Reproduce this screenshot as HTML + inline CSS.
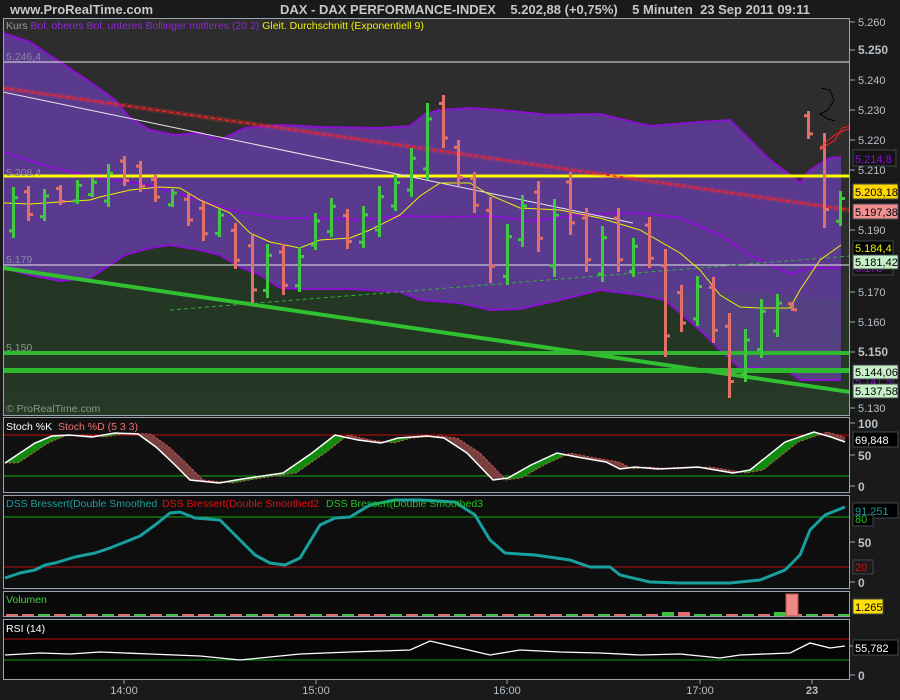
<!DOCTYPE html>
<html><head><meta charset="utf-8"><style>
html,body{margin:0;padding:0;background:#1a1a1a;}
body{width:900px;height:700px;overflow:hidden;position:relative;font-family:"Liberation Sans",sans-serif;}
svg{position:absolute;left:0;top:0;}
</style></head><body>
<svg id="s" width="900" height="700" xmlns="http://www.w3.org/2000/svg" font-family="Liberation Sans, sans-serif">
<defs>
<clipPath id="mc"><rect x="4" y="19" width="845" height="396"/></clipPath>
<linearGradient id="gg" x1="0" y1="0" x2="0" y2="1"><stop offset="0" stop-color="#203020"/><stop offset="1" stop-color="#263826"/></linearGradient>
</defs>
<rect x="0" y="0" width="900" height="700" fill="#1a1a1a"/>
<text x="10" y="14" font-size="13" font-weight="bold" fill="#c4c8cc">www.ProRealTime.com</text>
<text x="280" y="14" font-size="13" font-weight="bold" fill="#c4c8cc" xml:space="preserve">DAX - DAX PERFORMANCE-INDEX    5.202,88 (+0,75%)    5 Minuten  23 Sep 2011 09:11</text>
<g id="main" clip-path="url(#mc)"></g>
<rect x="3.5" y="18.5" width="846" height="397" fill="none" stroke="#9aa4ae"/>
<text x="6" y="29" font-size="10.5" fill="#9a9a9a">Kurs <tspan fill="#8a2ad0">Bol. oberes Bol. unteres Bollinger mittleres (20 2)</tspan> <tspan fill="#f0f000">Gleit. Durchschnitt (Exponentiell 9)</tspan></text>
<text x="6" y="60" font-size="10.5" fill="#8a8aa0">5.246,4</text>
<text x="6" y="176" font-size="10.5" fill="#8a8aa0">5.208,4</text>
<text x="6" y="263" font-size="10.5" fill="#8a8aa0">5.179</text>
<text x="6" y="351" font-size="10.5" fill="#8a9a8a">5.150</text>
<text x="6" y="412" font-size="10.5" fill="#8a9a8a">© ProRealTime.com</text>
<g id="axis" font-size="11" fill="#b8c0c8"></g>
<g id="panels"></g>
<g id="boxes" font-size="11"></g>
</svg>
<script>
var NS="http://www.w3.org/2000/svg";
function el(p,t,a,txt){var e=document.createElementNS(NS,t);for(var k in a)e.setAttribute(k,a[k]);if(txt!=null)e.textContent=txt;document.getElementById(p).appendChild(e);return e;}
function pts(a){return a.map(function(p){return p[0]+","+p[1]}).join(" ");}
var upper=[[3,33],[30,42],[60,62],[90,82],[115,100],[130,118],[150,130],[175,135],[200,133],[220,140],[245,128],[280,125],[320,127],[380,128],[410,126],[425,114],[440,110],[470,108],[500,110],[550,115],[600,114],[650,126],[700,122],[730,120],[770,160],[790,175],[800,183],[810,170],[830,158],[841,157]];
var lower=[[3,268],[30,275],[60,281],[90,278],[110,265],[125,255],[150,248],[170,245],[200,250],[220,255],[240,267],[260,275],[280,288],[300,289],[350,289],[400,292],[420,300],[460,303],[490,310],[520,309],[560,300],[600,290],[640,295],[665,300],[700,330],[720,350],[740,368],[760,368],[790,372],[800,380],[841,380]];
var mid=[[3,152],[50,167],[100,178],[150,185],[190,197],[230,210],[280,218],[320,218],[360,220],[400,216],[450,217],[490,216],[530,221],[580,215],[620,213],[650,214],[680,218],[720,235],[750,255],[790,274],[810,268],[841,268]];
var ema=[[3,203],[30,204],[60,202],[90,200],[100,197],[130,190],[160,187],[180,188],[200,200],[230,213],[250,233],[270,242],[300,248],[320,240],[350,238],[370,230],[400,215],[420,196],[440,183],[470,183],[490,195],[520,208],[560,210],[600,218],[640,230],[680,253],[700,270],[720,295],[740,307],[760,308],[790,308],[800,290],[820,260],[841,245]];
el("main","rect",{x:0,y:0,width:900,height:420,fill:"url(#gg)"});
el("main","polygon",{points:pts([[3,19],[850,19],[850,258]].concat(lower.slice().reverse())),fill:"#2d2d2d"});
el("main","polygon",{points:pts(upper.concat(lower.slice().reverse())),fill:"#5a3a8e"});
el("main","polygon",{points:pts([[640,295],[665,300],[700,330],[720,350],[740,368],[760,368],[790,372],[800,380],[841,380],[841,300],[700,290]]),fill:"#4c4c72",opacity:"0.45"});
el("main","polyline",{points:pts(upper),fill:"none",stroke:"#8a10d0","stroke-width":2});
el("main","polyline",{points:pts(lower),fill:"none",stroke:"#8a10d0","stroke-width":2});
el("main","polyline",{points:pts(mid),fill:"none",stroke:"#8a10d0","stroke-width":2});
el("main","line",{x1:3,y1:62,x2:850,y2:62,stroke:"#e8e8e8","stroke-width":1});
el("main","line",{x1:3,y1:265,x2:850,y2:265,stroke:"#e8e8e8","stroke-width":1});
el("main","line",{x1:3,y1:176,x2:850,y2:176,stroke:"#ffff00","stroke-width":3});
el("main","line",{x1:3,y1:88,x2:850,y2:210,stroke:"#ff3030","stroke-width":5,opacity:0.25});
el("main","line",{x1:3,y1:88,x2:850,y2:210,stroke:"#ff2020","stroke-width":1.5,"stroke-dasharray":"4,3"});
el("main","line",{x1:3,y1:92,x2:633,y2:223,stroke:"#e8e8e8","stroke-width":1});
el("main","line",{x1:3,y1:268,x2:850,y2:392,stroke:"#30c030","stroke-width":4});
el("main","line",{x1:170,y1:310,x2:850,y2:256,stroke:"#30b030","stroke-width":1,"stroke-dasharray":"4,3"});
el("main","rect",{x:3,y:351,width:847,height:4,fill:"#30b830"});
el("main","rect",{x:3,y:368,width:847,height:5,fill:"#30b830"});
el("main","polyline",{points:pts(ema),fill:"none",stroke:"#f0f000","stroke-width":1});
var bars=[[13,187,238,"g"],[28,186,221,"r"],[44,189,221,"g"],[60,185,205,"r"],[77,180,204,"g"],[92,178,197,"g"],[108,164,207,"g"],[124,156,186,"r"],[140,161,192,"r"],[155,175,202,"r"],[172,189,207,"g"],[188,194,226,"r"],[203,202,241,"r"],[219,209,237,"g"],[235,223,269,"r"],[252,235,303,"r"],[267,244,298,"g"],[283,244,295,"r"],[299,247,292,"g"],[315,213,250,"g"],[331,198,237,"g"],[347,209,249,"r"],[363,206,248,"g"],[379,186,237,"g"],[395,175,211,"g"],[411,148,197,"g"],[427,103,180,"g"],[443,95,148,"r"],[458,140,186,"r"],[474,172,213,"r"],[490,197,283,"r"],[507,224,285,"g"],[522,195,247,"g"],[538,181,252,"r"],[554,199,277,"g"],[570,172,235,"r"],[586,208,272,"r"],[602,226,282,"g"],[618,208,272,"r"],[633,238,277,"g"],[649,217,268,"r"],[665,249,357,"r"],[681,285,332,"r"],[697,276,326,"g"],[713,277,343,"r"],[729,313,398,"r"],[745,329,382,"g"],[761,299,358,"g"],[777,294,337,"g"],[792,302,311,"r"],[808,111,139,"r"],[824,133,228,"r"],[840,191,226,"g"]];
bars.forEach(function(b,i){var c=b[3]=="g"?"#40c840":"#e07068";var x=b[0],h=b[1],l=b[2];
 el("main","rect",{x:x-1,y:h,width:3,height:l-h,fill:c});
 var o,cl; if(b[3]=="g"){o=l-(l-h)*0.15;cl=h+(l-h)*0.2;}else{o=h+(l-h)*0.15;cl=l-(l-h)*0.2;}
 el("main","rect",{x:x-4,y:o-1,width:3,height:3,fill:c});
 el("main","rect",{x:x+2,y:cl-1,width:3,height:3,fill:c});});
el("main","polyline",{points:"820,150 835,140 842,128 850,126",fill:"none",stroke:"#ff2020","stroke-width":1});
el("main","polyline",{points:"822,145 835,135 845,130 852,128",fill:"none",stroke:"#ff2020","stroke-width":1});
el("main","polyline",{points:"821,88 830,90 834,100 828,110 820,114 828,119 835,121",fill:"none",stroke:"#000","stroke-width":1});
[[5260,22],[5250,50],[5240,80],[5230,110],[5220,140],[5210,170],[5190,230],[5170,292],[5160,322],[5150,352],[5130,408]].forEach(function(a){
 el("axis","line",{x1:850,y1:a[1],x2:855,y2:a[1],stroke:"#9aa4ae"});
 var t=el("axis","text",{x:858,y:a[1]+4},(a[0]/1000).toFixed(3));
 if(a[0]==5250||a[0]==5150){t.setAttribute("font-weight","bold");t.setAttribute("font-size","12");}
});
function box(x,y,w,h,bg,fg,txt,bd){el("boxes","rect",{x:x,y:y,width:w,height:h,fill:bg,stroke:bd||"#40484f"});el("boxes","text",{x:x+2,y:y+h-3,fill:fg},txt);}
box(853,150,43,16,"#141414","#8a10d0","5.214,8");
box(853,184,45,15,"#ffd800","#000","5.203,18");
box(853,204,45,15,"#f09090","#000","5.197,38");
box(853,241,40,14,"#000","#f0f000","5.184,4");
box(853,263,40,12,"#141414","#8a10d0","5.178");
box(853,255,45,14,"#c8f0c8","#000","5.181,42");
box(853,378,40,10,"#141414","#8a10d0","5.141,5");
box(853,365,45,14,"#c8f0c8","#000","5.144,06");
box(853,384,45,14,"#c8f0c8","#000","5.137,58");
var P="panels";
function frame(y1,y2,bg){el(P,"rect",{x:3.5,y:y1+.5,width:846,height:y2-y1,fill:bg,stroke:"#9aa4ae"});}
frame(417,492,"#111111");frame(495,588,"#0e0e0e");frame(591,616,"#0a0a0a");frame(619,679,"#050505");
el(P,"line",{x1:4,y1:435,x2:849,y2:435,stroke:"#c01010"});
el(P,"line",{x1:4,y1:476,x2:849,y2:476,stroke:"#10b010"});
var K=[[5,463],[35,443],[52,436],[69,435],[92,437],[115,433],[138,434],[156,447],[173,463],[190,480],[219,483],[242,479],[283,473],[312,453],[335,435],[358,440],[381,443],[398,438],[427,436],[444,438],[467,453],[493,480],[508,478],[531,465],[557,453],[577,457],[606,462],[620,469],[635,467],[658,469],[698,467],[733,473],[750,470],[785,442],[814,432],[831,437],[845,442]];
function interp(a,x){if(x<=a[0][0])return a[0][1];for(var i=1;i<a.length;i++){if(x<=a[i][0]){var t=(x-a[i-1][0])/(a[i][0]-a[i-1][0]);return a[i-1][1]+t*(a[i][1]-a[i-1][1]);}}return a[a.length-1][1];}
var LAG=13;
for(var x=5;x<845;x++){var k=interp(K,x),d=interp(K,x-LAG);var y1=Math.min(k,d),h=Math.abs(k-d);if(h>0.3)el(P,"rect",{x:x,y:y1,width:1,height:h,fill:k<d?"#108a10":"#7a4040"});}
var Dp=[];for(var x=5;x<=845;x+=3)Dp.push([x,interp(K,x-LAG)]);
el(P,"polyline",{points:pts(Dp),fill:"none",stroke:"#e05050","stroke-width":1,"stroke-dasharray":"2,2"});
el(P,"polyline",{points:pts(K),fill:"none",stroke:"#fff","stroke-width":1.5});
el(P,"text",{x:6,y:430,"font-size":"10.5",fill:"#fff"},"Stoch %K ");
el(P,"text",{x:58,y:430,"font-size":"10.5",fill:"#f07070"},"Stoch %D (5 3 3)");
el(P,"line",{x1:4,y1:517,x2:849,y2:517,stroke:"#10b010"});
el(P,"line",{x1:4,y1:567,x2:849,y2:567,stroke:"#b01010"});
var dss=[[5,578],[20,573],[35,570],[45,565],[55,563],[75,557],[95,553],[110,548],[125,542],[140,536],[155,525],[170,513],[180,512],[195,518],[220,520],[235,535],[255,555],[270,563],[285,565],[300,558],[320,525],[335,518],[350,517],[370,505],[395,500],[420,500],[455,502],[475,515],[490,540],[505,553],[535,555],[570,560],[590,567],[610,567],[620,575],[650,582],[680,583],[700,583],[730,583],[760,580],[785,570],[800,555],[810,530],[825,515],[845,507]];
el(P,"polyline",{points:pts(dss),fill:"none",stroke:"#18a0a0","stroke-width":3,"stroke-linejoin":"round"});
el(P,"text",{x:6,y:507,"font-size":"10.5",fill:"#18a0a0"},"DSS Bressert(Double Smoothed ");
el(P,"text",{x:162,y:507,"font-size":"10.5",fill:"#e01010"},"DSS Bressert(Double Smoothed2 ");
el(P,"text",{x:326,y:507,"font-size":"10.5",fill:"#20c020"},"DSS Bressert(Double Smoothed3");
el(P,"text",{x:6,y:603,"font-size":"10.5",fill:"#40d040"},"Volumen");
for(var x=6;x<845;x+=16){var big=(x>=662&&x<=680)||(x>=768&&x<775);var g=Math.sin(x)>0;el(P,"rect",{x:x,y:big?612:614,width:12,height:big?4:2,fill:g?"#40c040":"#e07070"});}
el(P,"rect",{x:786,y:594,width:12,height:22,fill:"#f08888",stroke:"#c05050"});
el(P,"line",{x1:4,y1:639,x2:849,y2:639,stroke:"#b01010"});
el(P,"line",{x1:4,y1:660,x2:849,y2:660,stroke:"#10a010"});
var rsi=[[5,655],[40,653],[70,654],[100,652],[150,654],[200,656],[240,660],[270,657],[300,654],[350,652],[410,650],[430,641],[460,648],[490,655],[520,650],[560,652],[600,653],[640,655],[680,654],[720,658],[740,655],[790,653],[810,643],[830,648],[845,646]];
el(P,"polyline",{points:pts(rsi),fill:"none",stroke:"#fff","stroke-width":1.3});
el(P,"text",{x:6,y:632,"font-size":"10.5",fill:"#fff"},"RSI (14)");
[[423,"100"],[455,"50"],[486,"0"],[542,"50"],[582,"0"],[646,"100"],[675,"0"]].forEach(function(a){el(P,"line",{x1:850,y1:a[0],x2:855,y2:a[0],stroke:"#9aa4ae"});el(P,"text",{x:858,y:a[0]+5,"font-size":"12","font-weight":"bold",fill:"#b8c0c8"},a[1]);});
box(853,432,45,15,"#000","#fff","69,848");
box(853,503,45,15,"#000","#18a0a0","91,251");
box(853,515,20,11,"#000","#20c020","80");
box(853,560,20,14,"#1a1a1a","#e01010","20");
box(853,599,30,15,"#ffe000","#000","1.265");
box(853,640,45,15,"#000","#fff","55,782");
[[124,"14:00"],[316,"15:00"],[507,"16:00"],[700,"17:00"],[812,"23"]].forEach(function(a){el(P,"line",{x1:a[0],y1:680,x2:a[0],y2:684,stroke:"#9aa4ae"});el(P,"text",{x:a[0],y:694,"font-size":"11",fill:"#b8c0c8","text-anchor":"middle","font-weight":a[1]=="23"?"bold":"normal"},a[1]);});
</script>
</body></html>
